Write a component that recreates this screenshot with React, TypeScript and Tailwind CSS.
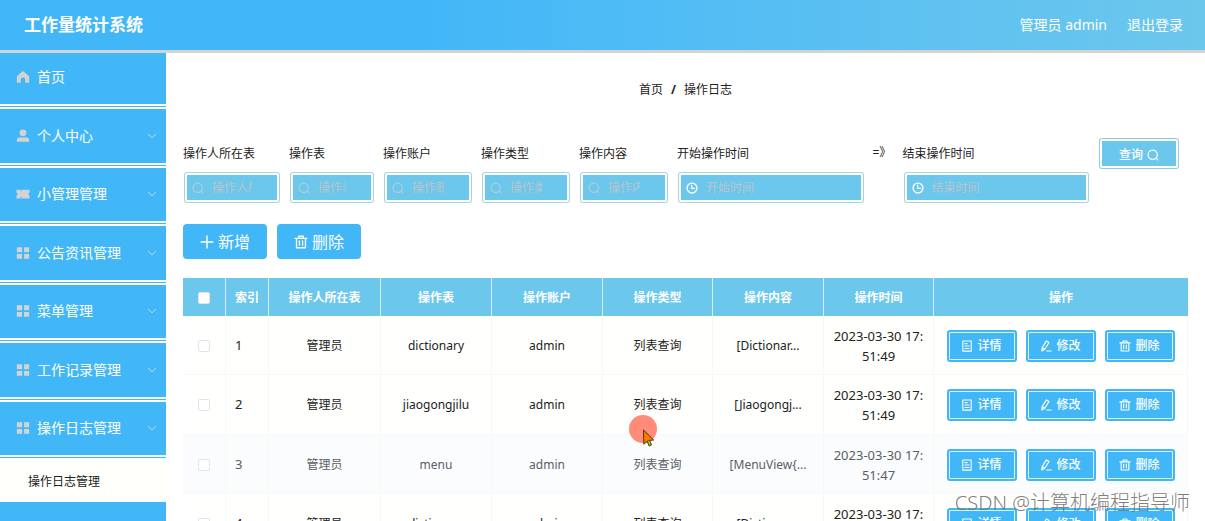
import { useState } from "react";
import type { ReactNode } from "react";
import clsx from "clsx";

interface IconProps {
  className?: string;
}

function Svg({ className, children }: IconProps & { children: ReactNode }) {
  return (
    <svg
      viewBox="0 0 16 16"
      fill="none"
      stroke="currentColor"
      strokeLinecap="round"
      strokeLinejoin="round"
      className={clsx("shrink-0", className)}
      aria-hidden="true"
    >
      {children}
    </svg>
  );
}

function HomeIcon({ className }: IconProps) {
  return (
    <Svg className={className}>
      <path d="M8 1.2 15 7v7.6h-4.4v-3.4a2.6 2.6 0 0 0-5.2 0v3.4H1V7Z" fill="currentColor" stroke="none" />
    </Svg>
  );
}

function UserIcon({ className }: IconProps) {
  return (
    <Svg className={className}>
      <circle cx="8" cy="4.4" r="3.9" fill="currentColor" stroke="none" />
      <path d="M4 9.6h8a3 3 0 0 1 3 3v2H1v-2a3 3 0 0 1 3-3Z" fill="currentColor" stroke="none" />
    </Svg>
  );
}

function TicketIcon({ className }: IconProps) {
  return (
    <Svg className={className}>
      <path
        d="M0.5 3h4.8v1.6h1V3h9.2v3.2a1.9 1.9 0 0 0 0 3.6V13H6.3v-1.6h-1V13H0.5V9.8a1.9 1.9 0 0 0 0-3.6Z"
        fill="currentColor"
        stroke="none"
      />
    </Svg>
  );
}

function GridIcon({ className }: IconProps) {
  return (
    <Svg className={className}>
      <path
        d="M1 1.5h6v5.6H1ZM9.2 1.5H15v5.6H9.2ZM1 9h6v5.6H1ZM9.2 9H15v5.6H9.2Z"
        fill="currentColor"
        stroke="none"
      />
    </Svg>
  );
}

function ChevronIcon({ className }: IconProps) {
  return (
    <Svg className={className}>
      <path d="m3 5.5 5 5 5-5" strokeWidth="1.3" />
    </Svg>
  );
}

function SearchIcon({ className }: IconProps) {
  return (
    <Svg className={className}>
      <circle cx="7.6" cy="7.6" r="6.2" strokeWidth="1.6" />
      <path d="m12.2 12.2 2.2 2.2" strokeWidth="1.6" />
    </Svg>
  );
}

function ClockIcon({ className }: IconProps) {
  return (
    <Svg className={className}>
      <circle cx="8" cy="8" r="6.6" strokeWidth="1.8" />
      <path d="M7.6 4.2v4.4h3.6" strokeWidth="1.6" />
    </Svg>
  );
}

function PlusIcon({ className }: IconProps) {
  return (
    <Svg className={className}>
      <path d="M8 1.2v13.6M1.2 8h13.6" strokeWidth="1.6" />
    </Svg>
  );
}

function TrashIcon({ className }: IconProps) {
  return (
    <Svg className={className}>
      <path d="M1.2 3.8h13.6M5.4 3.6V1.4h5.2v2.2M2.9 4v10.6h10.2V4M6.2 6.8v4.8M9.8 6.8v4.8" strokeWidth="1.5" />
    </Svg>
  );
}

function DocumentIcon({ className }: IconProps) {
  return (
    <Svg className={className}>
      <path d="M2.4 1.2h11.2v13.6H2.4ZM5.2 4.8h3M5.2 8h5.6M5.2 11.2h5.6" strokeWidth="1.4" />
    </Svg>
  );
}

function EditIcon({ className }: IconProps) {
  return (
    <Svg className={className}>
      <path d="m8.6 1.2 3.4 2.1-5.8 9.3-3.8 1.9.4-4ZM3.2 10.4l3 2M9 14.6h6" strokeWidth="1.5" />
    </Svg>
  );
}

const menu = [
  { label: "个人中心", icon: UserIcon },
  { label: "小管理管理", icon: TicketIcon },
  { label: "公告资讯管理", icon: GridIcon },
  { label: "菜单管理", icon: GridIcon },
  { label: "工作记录管理", icon: GridIcon },
  { label: "操作日志管理", icon: GridIcon },
];

const filters = [
  { id: "owner", label: "操作人所在表", width: "w-24" },
  { id: "table", label: "操作表", width: "w-[84px]" },
  { id: "account", label: "操作账户", width: "w-[88px]" },
  { id: "type", label: "操作类型", width: "w-[88px]" },
  { id: "content", label: "操作内容", width: "w-[88px]" },
];

const columns = [
  { title: "操作人所在表", width: "w-28" },
  { title: "操作表", width: "w-[111px]" },
  { title: "操作账户", width: "w-[111px]" },
  { title: "操作类型", width: "w-[110px]" },
  { title: "操作内容", width: "w-[111px]" },
  { title: "操作时间", width: "w-[110px]" },
];

const rows = [
  { id: 1, table: "dictionary", content: "[Dictionar...", time: "51:49" },
  { id: 2, table: "jiaogongjilu", content: "[Jiaogongj...", time: "51:49" },
  { id: 3, table: "menu", content: "[MenuView{...", time: "51:47" },
  { id: 4, table: "dictionary", content: "[Dictionar...", time: "51:45" },
];

const rowActions = [
  { label: "详情", icon: DocumentIcon },
  { label: "修改", icon: EditIcon },
  { label: "删除", icon: TrashIcon },
];

function Sidebar() {
  return (
    <nav className="w-[166px] shrink-0 bg-[#42b7f8] text-sm text-white">
      <a href="#home" className="flex h-14 items-center gap-[7px] border-b-[5px] border-double border-white pr-2 pb-1 pl-4">
        <HomeIcon className="size-[14px] text-[#d3d3d3]" />
        首页
      </a>
      <ul>
        {menu.map(({ label, icon: Icon }) => (
          <li key={label} className="h-[59px] even:h-[58px]">
            <button
              type="button"
              className="flex size-full items-center gap-[7px] border-b-[5px] border-double border-white pr-2 pb-px pl-4"
            >
              <Icon className="size-[14px] text-[#d3d3d3]" />
              {label}
              <ChevronIcon className="ml-auto size-3 text-[#b5dcf0]" />
            </button>
          </li>
        ))}
      </ul>
      <a href="#logs" className="flex h-[42px] items-center bg-[#fffffc] pt-px pl-7 text-xs text-[#222]">
        操作日志管理
      </a>
      <button type="button" className="flex h-[52px] w-full items-center gap-[7px] pr-2 pl-4">
        <GridIcon className="size-[14px] text-[#d3d3d3]" />
        客户管理
        <ChevronIcon className="ml-auto size-3 text-[#b5dcf0]" />
      </button>
    </nav>
  );
}

interface FieldProps {
  id: string;
  label: string;
  placeholder: string;
  className: string;
  icon: ReactNode;
}

function Field({ id, label, placeholder, className, icon }: FieldProps) {
  return (
    <div className={clsx("pt-[6px]", className)}>
      <label htmlFor={id} className="block leading-5 text-[#222]">
        {label}
      </label>
      <div className="mt-[9px] ml-[2px] flex h-[29px] items-center gap-2 rounded-[2px] border-2 border-white bg-[#6cc7ec] pr-[25px] pl-[5px] ring-1 ring-[#a9d5e2]">
        {icon}
        <input
          id={id}
          type="text"
          placeholder={placeholder}
          className="w-full min-w-0 bg-transparent text-white outline-none placeholder:text-[#b9c4cc]"
        />
      </div>
    </div>
  );
}

function SearchForm() {
  return (
    <form className="mt-[38px] flex items-start gap-[10px] pr-[10px]" onSubmit={(e) => e.preventDefault()}>
      {filters.map((f) => (
        <Field
          key={f.id}
          id={f.id}
          label={f.label}
          placeholder={f.label}
          className={f.width}
          icon={<SearchIcon className="size-3 text-[#b0ccd9]" />}
        />
      ))}
      <Field
        id="start"
        label="开始操作时间"
        placeholder="开始时间"
        className="min-w-0 flex-1"
        icon={<ClockIcon className="size-3 text-white" />}
      />
      <span className="w-5 shrink-0 pt-[5px] leading-5 whitespace-nowrap text-[#222]">=》</span>
      <Field
        id="end"
        label="结束操作时间"
        placeholder="结束时间"
        className="min-w-0 flex-1"
        icon={<ClockIcon className="size-3 text-white" />}
      />
      <button
        type="submit"
        className="mt-px ml-[2px] flex h-[29px] w-[78px] shrink-0 items-center justify-center gap-1 rounded-[2px] border-2 border-white bg-[#6cc7ec] pt-[2px] font-medium text-white ring-1 ring-[#8ccfe2]"
      >
        查询
        <SearchIcon className="size-3" />
      </button>
    </form>
  );
}

function Check({ label, checked, onChange }: { label: string; checked: boolean; onChange: () => void }) {
  return (
    <input
      type="checkbox"
      aria-label={label}
      checked={checked}
      onChange={onChange}
      className="mx-auto block size-3 appearance-none rounded-[2px] border border-[#e2e4e8] bg-white checked:bg-[#42b7f8]"
    />
  );
}

function LogTable() {
  const [selected, setSelected] = useState<number[]>([]);
  const allSelected = selected.length === rows.length;

  function toggle(id: number) {
    setSelected((prev) => (prev.includes(id) ? prev.filter((i) => i !== id) : [...prev, id]));
  }

  return (
    <table className="mt-[19px] w-full table-fixed border-separate border-spacing-0 text-center">
      <thead>
        <tr className="h-[38px] bg-[#6cc7ec] text-white *:pt-px">
          <th className="w-[43px] border-r border-[#d3eef8]">
            <Check
              label="全选"
              checked={allSelected}
              onChange={() => setSelected(allSelected ? [] : rows.map((r) => r.id))}
            />
          </th>
          <th className="w-[43px] border-r border-[#d3eef8] font-bold">索引</th>
          {columns.map((c) => (
            <th key={c.title} className={clsx("border-r border-[#d3eef8] font-bold", c.width)}>
              {c.title}
            </th>
          ))}
          <th className="font-bold">操作</th>
        </tr>
      </thead>
      <tbody>
        {rows.map((row) => (
          <tr
            key={row.id}
            className={clsx(
              "h-[59px] *:border-r *:border-b *:border-[#f7f8f8] *:pt-px even:h-[60px]",
              row.id === 3 ? "bg-[#fafcfd] text-[#5a5e66]" : "bg-[#fffffd] text-[#222]"
            )}
          >
            <td>
              <Check
                label={`选择第${row.id}行`}
                checked={selected.includes(row.id)}
                onChange={() => toggle(row.id)}
              />
            </td>
            <td className="pl-[9px] text-left text-[13px]">{row.id}</td>
            <td>管理员</td>
            <td>{row.table}</td>
            <td>admin</td>
            <td>列表查询</td>
            <td>{row.content}</td>
            <td className="text-[13px] leading-5">
              2023-03-30 17:
              <br />
              {row.time}
            </td>
            <td>
              <div className="flex justify-center gap-[9px]">
                {rowActions.map(({ label, icon: Icon }) => (
                  <button
                    key={label}
                    type="button"
                    className="flex h-8 w-[70px] items-center justify-center rounded-[3px] border-2 border-[#42b7f8] bg-[#42b7f8] font-medium text-white inset-ring-1 inset-ring-[#d9f1fd]"
                  >
                    <Icon className="mr-1 size-3" />
                    {label}
                  </button>
                ))}
              </div>
            </td>
          </tr>
        ))}
      </tbody>
    </table>
  );
}

export default function App() {
  return (
    <div className="relative flex h-screen flex-col overflow-hidden bg-white font-['Noto_Sans','Noto_Sans_CJK_SC',sans-serif] text-xs">
      <header className="flex h-[53px] shrink-0 items-center justify-between border-b-[3px] border-[#d3d3d3] bg-linear-to-r from-[#42b7f8] from-35% to-[#6cc7ec] pr-[22px] pl-6 text-white">
        <h1 className="text-[17px] font-bold">工作量统计系统</h1>
        <div className="flex gap-5 text-sm">
          <span>管理员 admin</span>
          <a href="#logout">退出登录</a>
        </div>
      </header>

      <div className="flex min-h-0 flex-1">
        <Sidebar />
        <main className="min-w-0 flex-1 px-[17px] pt-[27px]">
          <div className="flex justify-center gap-2 leading-5 text-[#222]">
            <a href="#home">首页</a>
            <span className="font-bold">/</span>
            <span>操作日志</span>
          </div>

          <SearchForm />

          <div className="mt-[22px] flex gap-[10px] text-base text-white">
            <button type="button" className="flex h-[35px] w-[84px] items-center justify-center gap-1 rounded bg-[#42b7f8]">
              <PlusIcon className="size-[14px]" />
              新增
            </button>
            <button type="button" className="flex h-[35px] w-[84px] items-center justify-center gap-1 rounded bg-[#42b7f8]">
              <TrashIcon className="size-[14px]" />
              删除
            </button>
          </div>

          <LogTable />
        </main>
      </div>

      {/* pointer with click highlight */}
      <svg className="pointer-events-none absolute top-[415px] left-[629px]" width="30" height="32" viewBox="0 0 30 32">
        <circle cx="14" cy="14" r="14" fill="#ff8b78" />
        <path d="m14.5 15 10.2 10-4.3.4 2 4.6-2.2.9-2-4.6-3.4 2.9Z" fill="#f57c00" stroke="#5c3410" />
        <path d="m18.4 26.2 1.9-.8 2 4.6-2 .8Z" fill="#c6d92c" stroke="#3c4410" strokeWidth="0.8" />
      </svg>
      <div className="pointer-events-none absolute right-[15px] bottom-[2px] text-xl leading-8 font-light text-[#6f6f6f]/90">
        CSDN @计算机编程指导师
      </div>
    </div>
  );
}
